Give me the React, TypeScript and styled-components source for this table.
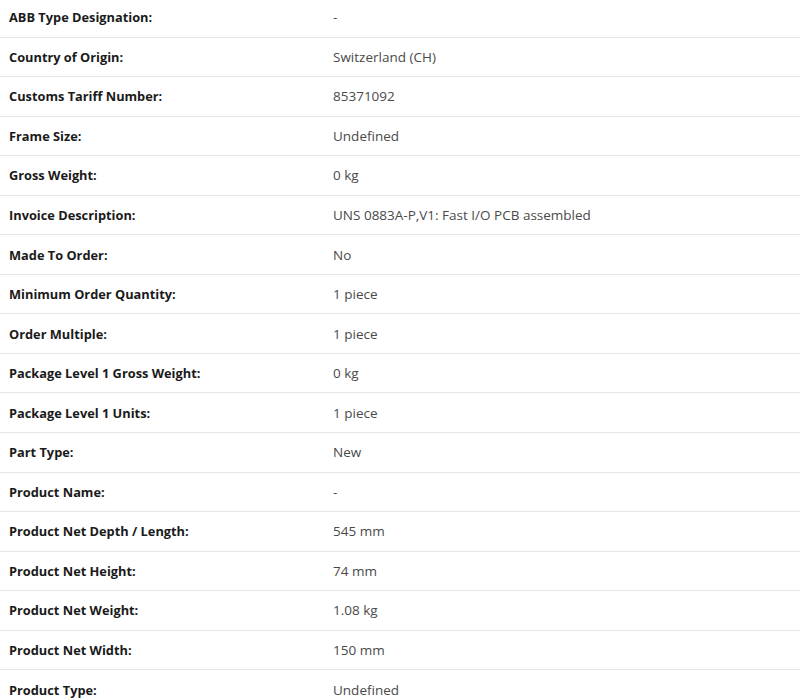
import styled, { createGlobalStyle } from "styled-components";

const GlobalStyle = createGlobalStyle`
  html, body {
    margin: 0;
    padding: 0;
    background: #ffffff;
  }
  body {
    font-family: "Open Sans", "Noto Sans", sans-serif;
    overflow: hidden;
  }
`;

const rows: [string, string][] = [
  ["ABB Type Designation:", "-"],
  ["Country of Origin:", "Switzerland (CH)"],
  ["Customs Tariff Number:", "85371092"],
  ["Frame Size:", "Undefined"],
  ["Gross Weight:", "0 kg"],
  ["Invoice Description:", "UNS 0883A-P,V1: Fast I/O PCB assembled"],
  ["Made To Order:", "No"],
  ["Minimum Order Quantity:", "1 piece"],
  ["Order Multiple:", "1 piece"],
  ["Package Level 1 Gross Weight:", "0 kg"],
  ["Package Level 1 Units:", "1 piece"],
  ["Part Type:", "New"],
  ["Product Name:", "-"],
  ["Product Net Depth / Length:", "545 mm"],
  ["Product Net Height:", "74 mm"],
  ["Product Net Weight:", "1.08 kg"],
  ["Product Net Width:", "150 mm"],
  ["Product Type:", "Undefined"],
];

const App = () => {
  return (
    <>
      <GlobalStyle />
      <Table>
        {rows.map(([label, value]) => (
          <Row key={label}>
            <Label>{label}</Label>
            <Value>{value}</Value>
          </Row>
        ))}
      </Table>
    </>
  );
};
export default App;

const Table = styled.div`
  width: 800px;
  margin-top: -2px;
  display: flex;
  flex-direction: column;
`;

const Row = styled.div`
  display: grid;
  grid-template-columns: 333px 1fr;
  align-items: center;
  height: 38.56px;
  border-bottom: 1px solid #e6e6e6;
`;

const Label = styled.div`
  padding-left: 9px;
  font-size: 12.8px;
  font-weight: 700;
  color: #1a1a1a;
`;

const Value = styled.div`
  font-size: 13.5px;
  color: #4a4a4a;
`;
